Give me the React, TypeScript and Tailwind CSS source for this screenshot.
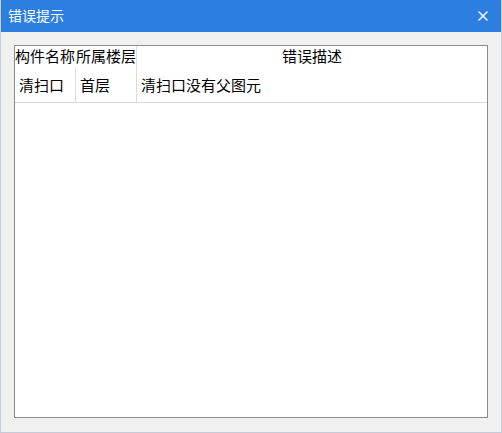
import { X } from 'lucide-react'

const rows = [{ name: '清扫口', floor: '首层', desc: '清扫口没有父图元' }]

export default function App() {
  return (
    <div
      className="w-[502px] h-[433px] flex flex-col bg-[#f0f0f0] border-x border-b border-[#c3cdd9] overflow-hidden"
      style={{ fontFamily: '"Microsoft YaHei", "Noto Sans CJK SC", sans-serif' }}
    >
      <div className="h-[32px] -mx-px bg-[#2c7fe0] flex items-center justify-between pl-[8px] pr-[11px] shrink-0">
        <span className="text-white text-[14px] pb-[1px]">错误提示</span>
        <X className="w-[16px] h-[16px] text-white" strokeWidth={2.2} />
      </div>
      <div className="flex-1 pt-[13px] pl-[13px] pr-[13px] pb-[14px]">
        <div className="h-full bg-white border border-[#8a8c90] text-[15px] text-black">
          <div className="flex h-[22px] leading-none">
            <div className="w-[61px] whitespace-nowrap flex items-center pb-[3px]">构件名称</div>
            <div className="w-[61px] whitespace-nowrap border-r border-[#dcdcdc] flex items-center pb-[3px]">所属楼层</div>
            <div className="flex-1 text-center flex items-center justify-center pb-[3px]">错误描述</div>
          </div>
          {rows.map((r) => (
            <div key={r.name} className="flex h-[35px] border-b border-[#d9d9d9] leading-none">
              <div className="w-[61px] border-r border-[#dcdcdc] flex items-center pl-[4px] pb-[2px]">{r.name}</div>
              <div className="w-[61px] border-r border-[#dcdcdc] flex items-center pl-[4px] pb-[2px]">{r.floor}</div>
              <div className="flex-1 flex items-center pl-[4px] pb-[2px] whitespace-nowrap">{r.desc}</div>
            </div>
          ))}
        </div>
      </div>
    </div>
  )
}
